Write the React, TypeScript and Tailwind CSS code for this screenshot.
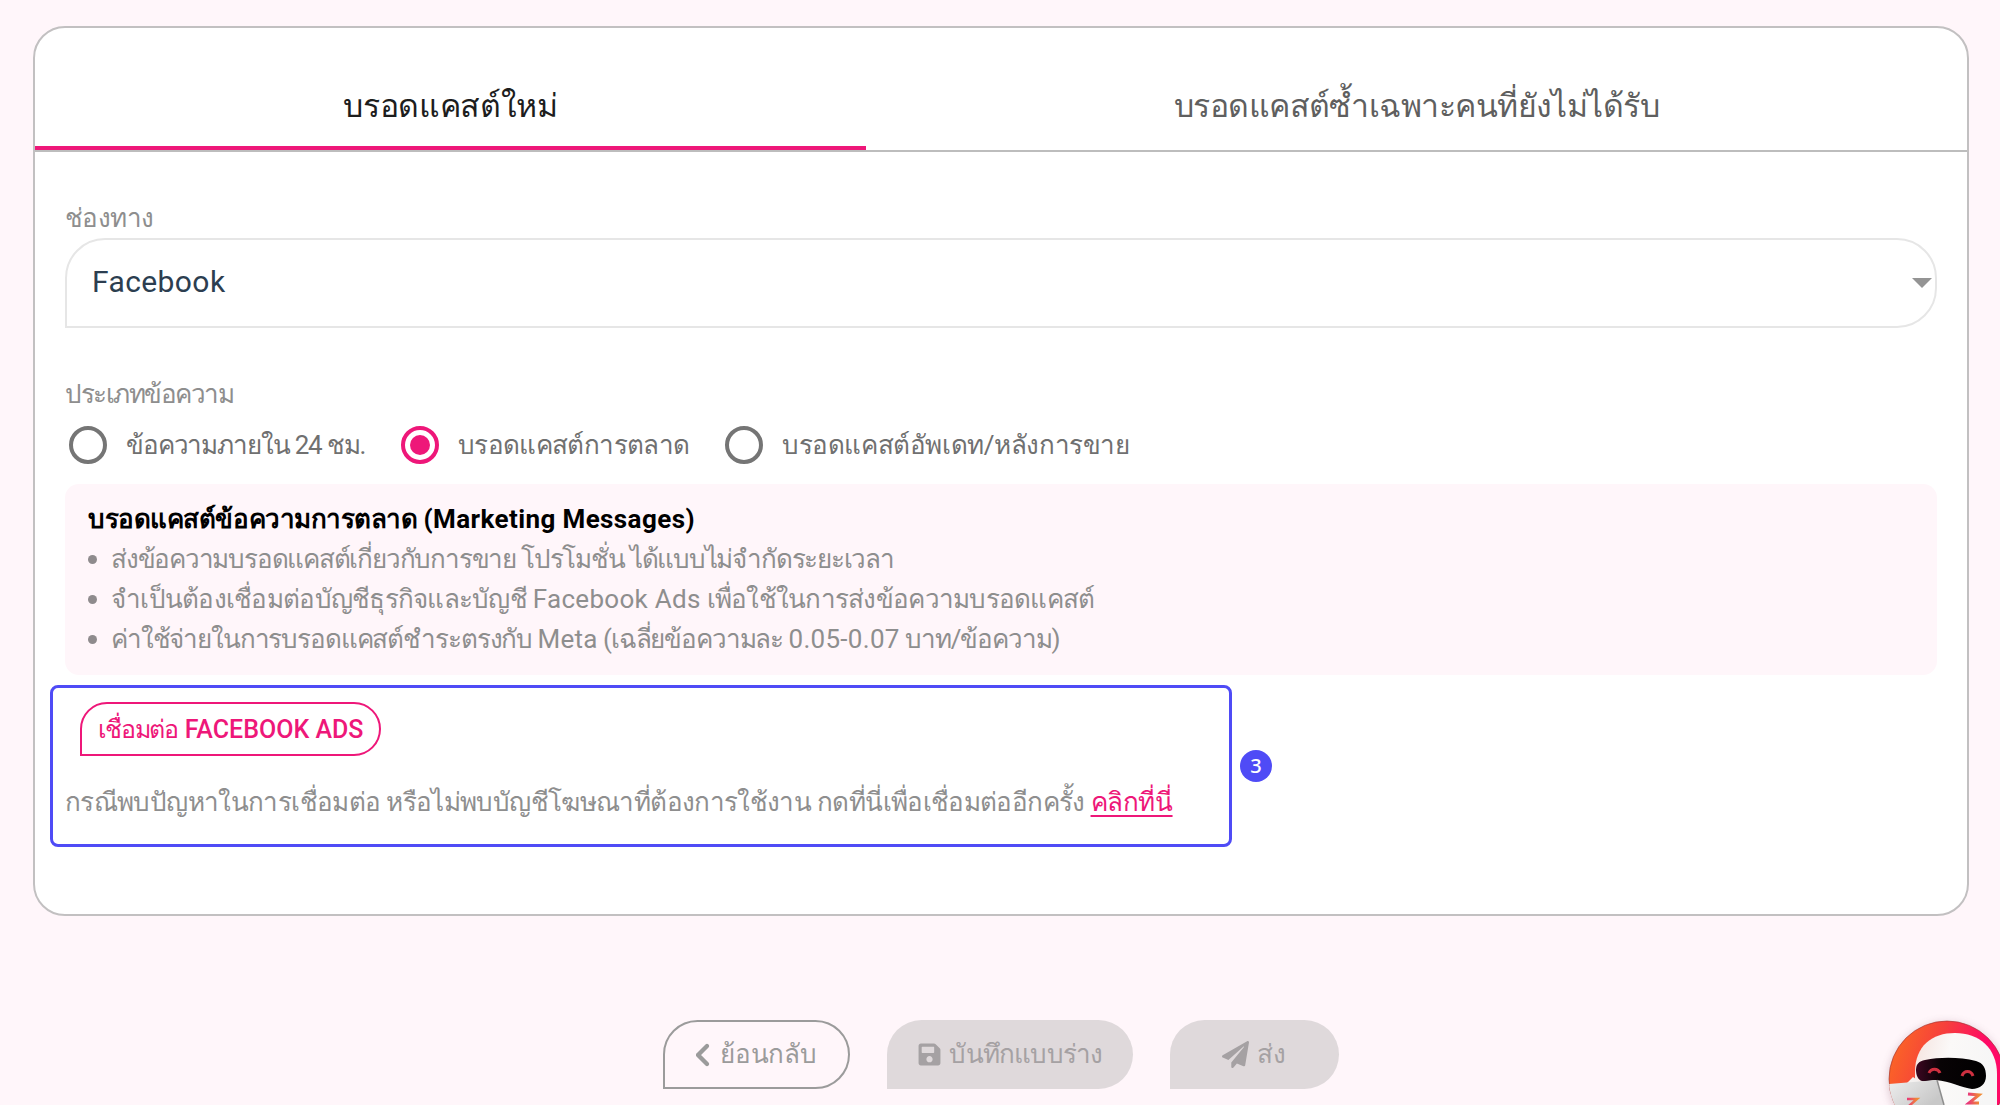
import type { ReactNode } from 'react';
import { FaPaperPlane, FaSave } from 'react-icons/fa';
import { FaChevronLeft } from 'react-icons/fa6';

const messageTypes = [
    {
        label: 'ข้อความภายใน 24 ชม.',
        width: 'w-[332px]',
        tracking: 'tracking-[-1.15px]',
        checked: false,
    },
    {
        label: 'บรอดแคสต์การตลาด',
        width: 'w-[324px]',
        tracking: 'tracking-[-0.65px]',
        checked: true,
    },
    {
        label: 'บรอดแคสต์อัพเดท/หลังการขาย',
        width: 'w-[420px]',
        tracking: 'tracking-[-0.4px]',
        checked: false,
    },
];

function Radio({ checked }: { checked: boolean }) {
    return (
        <span
            className={
                checked
                    ? 'flex size-[38px] shrink-0 items-center justify-center rounded-full border-4 border-[#ee1779]'
                    : 'size-[38px] shrink-0 rounded-full border-4 border-[#757575]'
            }
        >
            {checked && <span className="size-5 rounded-full bg-[#ee1779]" />}
        </span>
    );
}

function Bullet({ children }: { children: ReactNode }) {
    return (
        <li className="flex h-10 items-center gap-[14px]">
            <span className="size-[9px] shrink-0 rounded-full bg-[#8f8b8d]" />
            {children}
        </li>
    );
}

function BotAvatar() {
    return (
        <svg
            className="fixed bottom-0 right-0 h-[105px] w-[140px]"
            viewBox="0 0 140 105"
        >
            <defs>
                <linearGradient id="ring" x1="0" y1="0" x2="1" y2="0.35">
                    <stop offset="0.1" stopColor="#fb6526" />
                    <stop offset="0.45" stopColor="#f63f3c" />
                    <stop offset="0.8" stopColor="#ff0a66" />
                </linearGradient>
                <linearGradient id="head" x1="0" y1="0" x2="1" y2="0.2">
                    <stop offset="0" stopColor="#f5e3de" />
                    <stop offset="0.45" stopColor="#fbf9f8" />
                    <stop offset="1" stopColor="#f6f6f6" />
                </linearGradient>
                <linearGradient id="visor" x1="0" y1="0" x2="1" y2="0">
                    <stop offset="0" stopColor="#3d0721" />
                    <stop offset="0.35" stopColor="#080305" />
                    <stop offset="1" stopColor="#000" />
                </linearGradient>
                <linearGradient id="paper" x1="0" y1="0" x2="1" y2="0.5">
                    <stop offset="0" stopColor="#eeeeee" />
                    <stop offset="1" stopColor="#c8c8c8" />
                </linearGradient>
                <linearGradient id="zed" x1="0" y1="0" x2="1" y2="0">
                    <stop offset="0" stopColor="#e8357a" />
                    <stop offset="1" stopColor="#f08a35" />
                </linearGradient>
                <filter id="glow" x="-30%" y="-30%" width="160%" height="160%">
                    <feGaussianBlur stdDeviation="5" />
                </filter>
                <clipPath id="disc">
                    <circle cx="87" cy="79" r="58" />
                </clipPath>
            </defs>
            <circle cx="87" cy="81" r="58" fill="#7a4a5a" opacity="0.3" filter="url(#glow)" />
            <circle cx="87" cy="79" r="58" fill="url(#ring)" stroke="#9c3030" strokeWidth="0.6" />
            <g clipPath="url(#disc)">
                <path
                    d="M55 105V72C55 46 72 33 95 33C119 33 137 48 137 74V105Z"
                    fill="url(#head)"
                />
                <path d="M29 86L47 83L53 77L60 82V105H29Z" fill="#f4f1f0" />
                <path
                    d="M65 60C80 57 100 57 116 61C123 63 126 68 126 76C126 84 120 89 112 89C102 88 90 81 76 80C70 80 66 82 62 81C58 80 56 75 56 70C56 64 59 61 65 60Z"
                    fill="url(#visor)"
                />
                <path d="M69 73C71 68 78 68 80 73" fill="none" stroke="#cf3040" strokeWidth="3" />
                <path d="M102 76C104 70 111 70 113 76" fill="none" stroke="#cf3040" strokeWidth="3" />
                <path d="M29 84L77 80L84 105H29Z" fill="url(#paper)" />
                <path d="M77 80L84 105" fill="none" stroke="#8d8d8d" strokeWidth="1.5" />
                <path d="M47 99H57L49 106" fill="none" stroke="url(#zed)" strokeWidth="2.5" />
                <path
                    d="M108 94L119 95L109 103H119"
                    fill="none"
                    stroke="url(#zed)"
                    strokeWidth="3"
                />
            </g>
        </svg>
    );
}

export default function App() {
    return (
        <main className="flex h-[1105px] w-[2000px] flex-col overflow-hidden bg-[#fff6fa] px-[33px] pt-[26px] font-['Roboto','Noto_Sans',sans-serif] text-[26px] text-[#8e8e8e]">
            <section className="flex h-[890px] w-[1936px] flex-col rounded-[32px] border-2 border-[#c2c0c1] bg-white">
                {/* Tabs */}
                <div className="flex h-[124px] shrink-0 border-b-2 border-[#bdbdbd] text-[32px] font-medium">
                    <div className="flex w-[831px] items-center justify-center border-b-4 border-[#ee1779] pt-[37px] tracking-[-0.3px] text-[#1d1d1d]">
                        บรอดแคสต์ใหม่
                    </div>
                    <div className="flex flex-1 items-center justify-center pt-[33px] tracking-[-0.55px] text-[#5f5f5f]">
                        บรอดแคสต์ซ้ำเฉพาะคนที่ยังไม่ได้รับ
                    </div>
                </div>

                <div className="flex flex-col px-[30px] pt-[46px]">
                    <label className="h-10 leading-10 tracking-[-0.6px]">
                        ช่องทาง
                    </label>
                    <div className="flex h-[90px] w-[1872px] items-center justify-between rounded-[40px] rounded-bl-none border-2 border-[#e6e6e6] pl-[25px] pr-[3px]">
                        <span className="pb-1 text-[30px] tracking-[0.4px] text-[#2c3e50]">
                            Facebook
                        </span>
                        <span className="border-x-[10px] border-t-[10px] border-x-transparent border-t-[#949494]" />
                    </div>

                    <div className="mt-[46px] h-10 leading-10 tracking-[-1.5px]">
                        ประเภทข้อความ
                    </div>
                    <div className="mt-[12px] flex h-[38px] pl-1 text-[#707070]">
                        {messageTypes.map((type) => (
                            <label
                                key={type.label}
                                className={`${type.width} flex items-center gap-[19px] whitespace-nowrap`}
                            >
                                <Radio checked={type.checked} />
                                <span className={type.tracking}>
                                    {type.label}
                                </span>
                            </label>
                        ))}
                    </div>

                    {/* Marketing message details */}
                    <div className="mt-5 h-[191px] w-[1872px] rounded-[14px] bg-[#fff6fa] px-[23px] pt-[15px]">
                        <h2 className="h-10 font-bold leading-10 text-black">
                            <span className="tracking-[-0.45px]">
                                บรอดแคสต์ข้อความการตลาด{' '}
                            </span>
                            <span className="tracking-[0.4px]">
                                (Marketing Messages)
                            </span>
                        </h2>
                        <ul className="whitespace-nowrap">
                            <Bullet>
                                <span className="tracking-[-1.22px]">
                                    ส่งข้อความบรอดแคสต์เกี่ยวกับการขาย โปรโมชั่น ได้แบบไม่จำกัดระยะเวลา
                                </span>
                            </Bullet>
                            <Bullet>
                                <span className="tracking-[-0.73px]">
                                    จำเป็นต้องเชื่อมต่อบัญชีธุรกิจและบัญชี{' '}
                                    <span className="tracking-[0.3px]">Facebook Ads</span>{' '}
                                    เพื่อใช้ในการส่งข้อความบรอดแคสต์
                                </span>
                            </Bullet>
                            <Bullet>
                                <span className="tracking-[-1.14px]">
                                    ค่าใช้จ่ายในการบรอดแคสต์ชำระตรงกับ{' '}
                                    <span className="tracking-[0.3px]">Meta</span>{' '}
                                    (เฉลี่ยข้อความละ{' '}
                                    <span className="tracking-[0.3px]">0.05-0.07</span>{' '}
                                    บาท/ข้อความ)
                                </span>
                            </Bullet>
                        </ul>
                    </div>

                    {/* Connect step */}
                    <div className="-ml-[15px] mt-[10px] flex items-center gap-2">
                        <div className="h-[162px] w-[1182px] rounded-lg border-[3px] border-[#4f4bf6] pt-[14px]">
                            <button className="ml-[27px] flex h-[54px] w-[301px] items-center justify-center gap-[7px] rounded-[27px] rounded-bl-none border-2 border-[#ee1779] pt-0.5 text-[25px] font-medium text-[#ee1779]">
                                <span className="tracking-[-1.3px]">เชื่อมต่อ</span>
                                <span>FACEBOOK ADS</span>
                            </button>
                            <p className="ml-3 mt-[26px] h-10 whitespace-nowrap leading-10 tracking-[-0.63px]">
                                กรณีพบปัญหาในการเชื่อมต่อ หรือไม่พบบัญชีโฆษณาที่ต้องการใช้งาน กดที่นี่เพื่อเชื่อมต่ออีกครั้ง{' '}
                                <a
                                    href="#"
                                    className="font-medium tracking-[-0.4px] text-[#ee1779] underline decoration-2 underline-offset-4"
                                >
                                    คลิกที่นี่
                                </a>
                            </p>
                        </div>
                        <span className="flex size-8 items-center justify-center rounded-full bg-[#4f4bf6] font-['Noto_Sans'] text-[20px] font-medium text-white">
                            3
                        </span>
                    </div>
                </div>
            </section>

            {/* Actions */}
            <div className="ml-[630px] mt-[104px] flex h-[69px] gap-[37px] font-medium">
                <button className="flex w-[187px] items-center justify-center gap-[8px] rounded-[35px] rounded-bl-none border-2 border-[#9b9b9b] text-[#9b9b9b]">
                    <FaChevronLeft className="h-[24px] w-[16px] stroke-current stroke-[28px]" />
                    <span className="tracking-[-0.3px]">ย้อนกลับ</span>
                </button>
                <button className="flex w-[246px] items-center justify-center gap-[7px] rounded-[35px] rounded-bl-none bg-[#dfd9db] text-[#a5a1a3]">
                    <FaSave className="size-[25px]" />
                    <span className="tracking-[-0.8px]">บันทึกแบบร่าง</span>
                </button>
                <button className="flex w-[169px] items-center justify-center gap-[8px] rounded-[35px] rounded-bl-none bg-[#dfd9db] text-[#a5a1a3]">
                    <FaPaperPlane className="size-[27px]" />
                    <span className="tracking-[0.6px]">ส่ง</span>
                </button>
            </div>
            <BotAvatar />
        </main>
    );
}
